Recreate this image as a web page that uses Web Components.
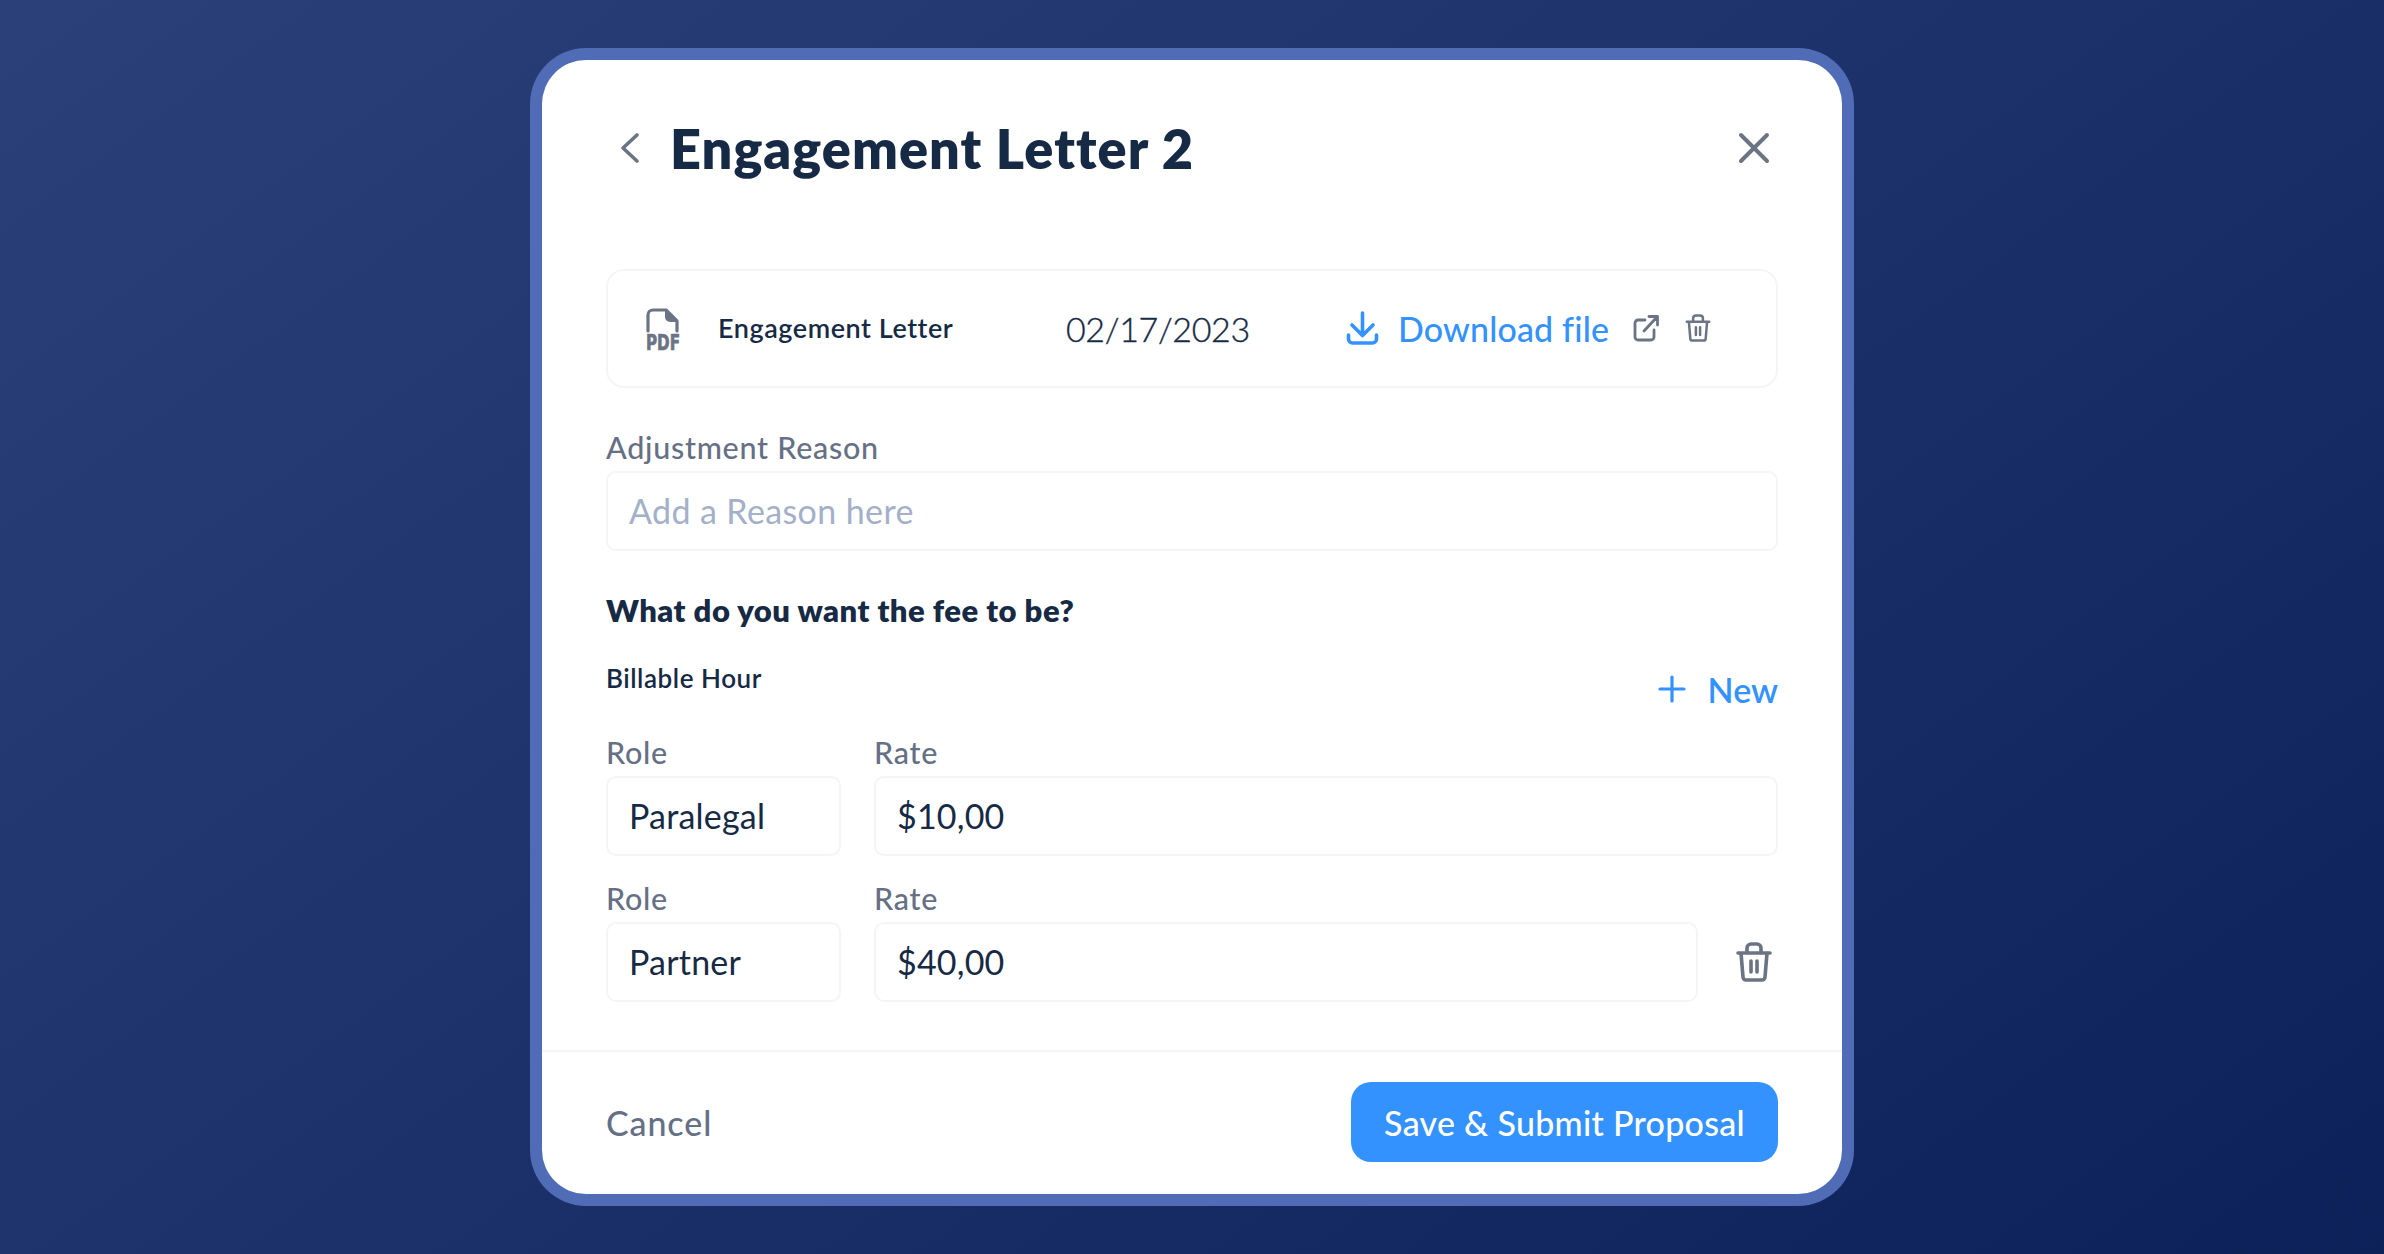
<!DOCTYPE html>
<html lang="en"><head><meta charset="utf-8"><title>Engagement Letter 2</title>
<style>
html,body{margin:0;height:1254px;overflow:hidden}
body{background:linear-gradient(144deg,#2b4079 0%,#0d2159 100%);display:flex;align-items:center;justify-content:center;font-family:Lato,"Open Sans",sans-serif;color:#172a45}
</style></head><body>
<proposal-modal>
 <modal-header slot="header">Engagement Letter 2</modal-header>
 <document-card></document-card>
 <form-field style="margin-top:43px" label="Adjustment Reason" value="Add a Reason here" placeholder></form-field>
 <fee-section>
  <rate-row role="Paralegal" rate="$10,00"></rate-row>
  <rate-row role="Partner" rate="$40,00" removable style="margin-top:26px"></rate-row>
 </fee-section>
 <modal-footer slot="footer"></modal-footer>
</proposal-modal>
<script>
const TRASH=`<svg viewBox="0 0 36 40" width="100%" height="100%" fill="none" stroke="#6b7484" stroke-width="3.6" stroke-linecap="round" stroke-linejoin="round"><path d="M2 11H34M11 10V6a4 4 0 0 1 4-4h6a4 4 0 0 1 4 4v4M5 11l2 24a3 3 0 0 0 3 3h16a3 3 0 0 0 3-3l2-24M15 19v11M21 19v11"/></svg>`;
function def(name,css,html){
 customElements.define(name,class extends HTMLElement{
  connectedCallback(){ if(this.shadowRoot) return;
   const r=this.attachShadow({mode:'open'});
   r.innerHTML=`<style>${css}</style>`+(typeof html==='function'?html(this):html);
  }
 });
}
def('proposal-modal',`
 :host{display:block;box-sizing:border-box;width:1324px;height:1158px;padding:12px;background:#506cb7;border-radius:56px}
 .sheet{box-sizing:border-box;height:1134px;background:#fff;border-radius:44px;display:flex;flex-direction:column;overflow:hidden}
 .body{flex:1;padding:0 64px}
`,`<div class="sheet"><div class="body"><slot name="header"></slot><slot></slot></div><slot name="footer"></slot></div>`);
def('modal-header',`
 :host{display:flex;align-items:center;height:60px;margin-top:58px;margin-bottom:91px}
 h1{margin:0;padding-top:2px;font:800 54px/60px Lato,sans-serif;letter-spacing:1.05px;color:#172a45;flex:1;margin-left:30px}
 svg{display:block;flex:none}
`,`<svg width="20" height="32" viewBox="0 0 20 32" style="margin-left:14px" fill="none" stroke="#6b7484" stroke-width="3.6" stroke-linecap="round" stroke-linejoin="round"><path d="M17 3L3 16L17 29"/></svg>
<h1><slot></slot></h1>
<svg width="32" height="32" viewBox="0 0 32 32" style="margin-right:8px" fill="none" stroke="#6b7484" stroke-width="4" stroke-linecap="round"><path d="M3 3L29 29M29 3L3 29"/></svg>`);
def('document-card',`
 :host{display:flex;align-items:center;box-sizing:border-box;height:119px;border:2px solid #f4f5f7;border-radius:18px;padding-left:37px;position:relative}
 .pdf{width:36px;height:44px;flex:none;margin-right:37px;margin-top:2px;overflow:visible}
 .name{font:600 27px/32px Lato,sans-serif;letter-spacing:.55px;width:348px;flex:none;color:#172a45;margin-top:-2px}
 .date{font:300 34px/40px Lato,sans-serif;letter-spacing:-.35px;width:280px;flex:none;color:#172a45;-webkit-text-stroke:.35px #172a45}
 .dl{width:33px;height:34px;flex:none;margin-right:19px;margin-top:-2px}
 .link{font:500 34px/40px Lato,sans-serif;letter-spacing:.15px;color:#3492ff;width:234.500px;flex:none}
 .ext{width:26px;height:28px;flex:none;margin-right:26px;margin-top:-2px}
 .tr{width:26px;height:28px;flex:none;margin-top:-1px}
 svg{display:block}
`,`<svg class="pdf" viewBox="0 0 36 44" fill="none" stroke="#6b7484" stroke-width="3.2" stroke-linecap="round" stroke-linejoin="round"><path d="M3 23V7a5 5 0 0 1 5-5H21L32 13V23"/><path d="M21 3V9a4 4 0 0 0 4 4h6z" fill="#6b7484" stroke-width="2"/><text x="1" y="42" font-family="DejaVu Sans Condensed,DejaVu Sans,sans-serif" font-weight="700" font-size="22" fill="#6b7484" stroke="#6b7484" stroke-width=".7" textLength="34" lengthAdjust="spacingAndGlyphs">PDF</text></svg>
<span class="name">Engagement Letter</span><span class="date">02/17/2023</span>
<svg class="dl" viewBox="0 0 33 34" fill="none" stroke="#3492ff" stroke-width="3.6" stroke-linecap="round" stroke-linejoin="round"><path d="M16.500 2V24M6 14L16.500 24.500L27 14M2.500 24v4a4 4 0 0 0 4 4h20a4 4 0 0 0 4-4v-4"/></svg>
<span class="link">Download file</span>
<svg class="ext" viewBox="0 0 26 28" fill="none" stroke="#6b7484" stroke-width="2.800" stroke-linecap="round" stroke-linejoin="round"><path d="M12 6H5a3 3 0 0 0-3 3v14a3 3 0 0 0 3 3h13a3 3 0 0 0 3-3v-7M11 17L24 3M16 2.500h8.500V11"/></svg>
<span class="tr">${TRASH}</span>`);
def('form-field',`
 :host{display:block}
 label{display:block;height:34px;margin-bottom:6px;font:500 30.500px/32px Lato,sans-serif;letter-spacing:.72px;color:#667085}
 .box{box-sizing:border-box;height:80px;border:2px solid #f4f5f7;border-radius:10px;padding:0 21px;display:flex;align-items:center;font:400 34px/40px Lato,sans-serif;letter-spacing:.2px;color:#172a45}
 :host([placeholder]) .box{color:#a3b0c8;letter-spacing:.38px}
`,el=>`<label>${el.getAttribute('label')}</label><div class="box">${el.getAttribute('value')}</div>`);
def('fee-section',`
 :host{display:block}
 h2{margin:39px 0 0;font:800 31px/40px Lato,sans-serif;letter-spacing:.47px;color:#172a45}
 .top{display:flex;justify-content:space-between;align-items:flex-start;height:74px;margin-top:32px}
 .bill{font:600 26px/32px Lato,sans-serif;letter-spacing:.55px}
 .new{display:flex;align-items:center;gap:22px;margin-top:8px;font:600 34px/40px Lato,sans-serif;letter-spacing:0;color:#3492ff}
 svg{display:block;margin-top:-2px}
 .rows{display:block;padding-bottom:48px}
`,`<h2>What do you want the fee to be?</h2>
<div class="top"><span class="bill">Billable Hour</span><span class="new"><svg width="28" height="28" viewBox="0 0 28 28" stroke="#3492ff" stroke-width="3.2" stroke-linecap="round"><path d="M14 2V26M2 14H26"/></svg>New</span></div>
<div class="rows"><slot></slot></div>`);
def('rate-row',`
 :host{display:flex;gap:33px;align-items:flex-end}
 .role{width:235px;flex:none}
 .rate{flex:1}
 .del{width:36px;height:40px;flex:none;margin:0 6px 20px 5px}
`,el=>`<form-field class="role" label="Role" value="${el.getAttribute('role')}"></form-field>
<form-field class="rate" label="Rate" value="${el.getAttribute('rate')}"></form-field>
${el.hasAttribute('removable')?`<span class="del">${TRASH}</span>`:''}`);
def('modal-footer',`
 :host{display:flex;justify-content:space-between;align-items:center;height:140px;border-top:2px solid #f4f5f7;padding:0 64px 2px 64px;box-sizing:content-box}
 .cancel{font:500 34px/40px Lato,sans-serif;letter-spacing:.9px;color:#667085;padding-top:2px}
 .btn{box-sizing:border-box;width:427px;height:80px;border-radius:20px;background:#3492ff;color:#fff;display:flex;align-items:center;justify-content:center;padding-top:2px;font:500 34px/40px Lato,sans-serif;letter-spacing:.27px}
`,`<span class="cancel">Cancel</span><span class="btn">Save &amp; Submit Proposal</span>`);
</script>
</body></html>
